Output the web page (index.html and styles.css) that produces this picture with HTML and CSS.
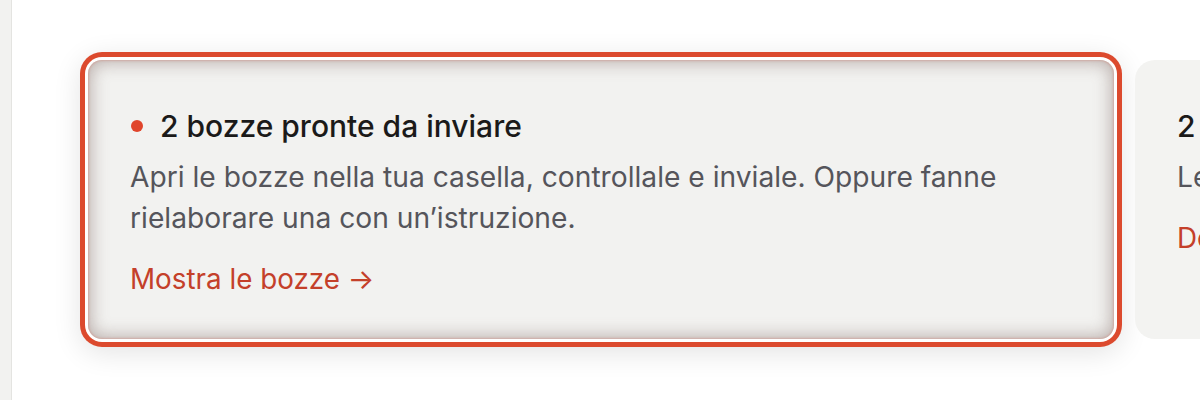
FILE: index.html
```html
<!DOCTYPE html>
<html lang="it">
<head>
<meta charset="utf-8">
<link rel="stylesheet" href="styles.css">
</head>
<body>
<div class="layout">
  <aside class="sidebar"></aside>
  <main class="main">
    <div class="carousel">
      <article class="card card--selected">
        <h2 class="card__title"><span class="dot"></span>2 bozze pronte da inviare</h2>
        <p class="card__text">Apri le bozze nella tua casella, controllale e inviale. Oppure fanne rielaborare una con un’istruzione.</p>
        <a class="card__link" href="#">Mostra le bozze →</a>
      </article>
      <article class="card">
        <h2 class="card__title">2 risposte in attesa</h2>
        <p class="card__text">Le conversazioni aspettano una tua risposta.</p>
        <a class="card__link" href="#">Dove rispondere →</a>
      </article>
    </div>
  </main>
</div>
</body>
</html>
```
FILE: styles.css
```css
* { box-sizing: border-box; }
html, body { margin: 0; height: 100%; }
body {
  background: #ffffff;
  font-family: Inter, "Noto Sans", sans-serif;
  overflow: hidden;
}
.layout {
  display: flex;
  height: 400px;
}
.sidebar {
  flex: 0 0 12px;
  background: #f2f2f0;
  border-right: 1px solid #e4e4e1;
}
.main {
  flex: 1;
  min-width: 0;
  padding: 60px 0 0 76px;
  overflow: hidden;
}
.carousel {
  display: flex;
  gap: 21px;
  align-items: stretch;
}
.card {
  flex: 0 0 1026px;
  background: #f3f3f1;
  border-radius: 20px;
  padding: 48px 42px 42px 42px;
}
.card--selected {
  background: #f2f2f0;
  border-radius: 14px;
  box-shadow:
    inset 0 0 2px 1px rgba(205, 150, 140, 0.6),
    inset 0 0 16px 4px rgba(125, 100, 95, 0.42),
    0 0 0 3px #ffffff,
    0 0 0 8px #dc4a2e,
    0 6px 28px 8px rgba(0, 0, 0, 0.11);
}
.card__title {
  margin: 0;
  display: flex;
  align-items: center;
  gap: 17px;
  font-size: 30px;
  line-height: 36px;
  font-weight: 500;
  color: #1b1a19;
  white-space: nowrap;
}
.dot {
  flex: 0 0 12px;
  width: 12px;
  height: 12px;
  border-radius: 50%;
  background: #e0452b;
  margin-left: 1px;
}
.card__text {
  margin: 13px 0 0;
  font-size: 28.2px;
  line-height: 41px;
  color: #55555b;
}
.card__link {
  display: inline-block;
  margin-top: 22px;
  font-size: 27.8px;
  line-height: 36px;
  color: #c4402a;
  text-decoration: none;
  white-space: nowrap;
}
```
